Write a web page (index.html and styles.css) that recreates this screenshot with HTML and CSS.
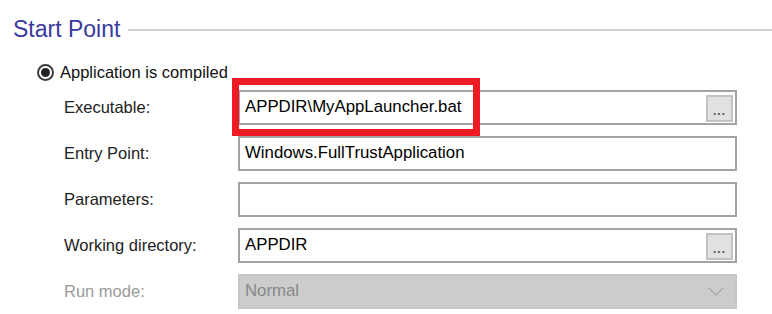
FILE: index.html
```html
<!DOCTYPE html>
<html lang="en">
<head>
    <meta charset="UTF-8">
    <meta name="viewport" content="width=device-width, initial-scale=1.0">
    <title>Start Point</title>
    <link rel="stylesheet" href="styles.css">
</head>
<body>
    <div class="panel">
        <div class="group-title">
            <span class="group-name">Start Point</span>
            <span class="rule"></span>
        </div>
        <div class="radio-row">
            <span class="radio"></span>
            <span>Application is compiled</span>
        </div>
        <div class="fields">
            <div class="field">
                <span class="label">Executable:</span>
                <div class="box">
                    <span class="value">APPDIR\MyAppLauncher.bat</span>
                    <span class="browse">...</span>
                    <span class="highlight"></span>
                </div>
            </div>
            <div class="field">
                <span class="label">Entry Point:</span>
                <div class="box">
                    <span class="value">Windows.FullTrustApplication</span>
                </div>
            </div>
            <div class="field">
                <span class="label">Parameters:</span>
                <div class="box">
                    <span class="value"></span>
                </div>
            </div>
            <div class="field">
                <span class="label">Working directory:</span>
                <div class="box">
                    <span class="value">APPDIR</span>
                    <span class="browse">...</span>
                </div>
            </div>
            <div class="field disabled">
                <span class="label">Run mode:</span>
                <div class="box">
                    <span class="value">Normal</span>
                    <svg class="chevron" width="16" height="10" viewBox="0 0 16 10">
                        <polyline points="1,1 8,8 15,1" fill="none" stroke="#a9a9a9" stroke-width="1.3"/>
                    </svg>
                </div>
            </div>
        </div>
    </div>
</body>
</html>
```

FILE: styles.css
```css
body {
    margin: 0;
    padding: 0;
    background: #ffffff;
    font-family: "Liberation Sans", Arial, sans-serif;
    color: #1e1e1e;
}
.panel {
    width: 772px;
    height: 314px;
    overflow: hidden;
}
.group-title {
    display: flex;
    align-items: center;
    gap: 8px;
    margin-top: 15px;
    padding-left: 13px;
    height: 28px;
}
.group-name {
    font-size: 23px;
    color: #3a3a9c;
    white-space: nowrap;
}
.rule {
    flex: 1;
    height: 2px;
    background-color: #d2d2d2;
    margin-top: 1px;
}
.radio-row {
    display: flex;
    align-items: center;
    gap: 6px;
    margin-top: 19px;
    padding-left: 37px;
    height: 20px;
    font-size: 16.5px;
    color: #111111;
}
.radio {
    width: 13px;
    height: 13px;
    border: 2px solid #3c3c3c;
    border-radius: 50%;
    display: flex;
    justify-content: center;
    align-items: center;
}
.radio::after {
    content: "";
    width: 9px;
    height: 9px;
    border-radius: 50%;
    background-color: #222222;
}
.fields {
    display: flex;
    flex-direction: column;
    gap: 11px;
    margin-top: 8px;
    padding-left: 64px;
}
.field {
    display: flex;
    align-items: center;
}
.label {
    width: 174px;
    font-size: 16.5px;
    color: #222222;
}
.box {
    position: relative;
    box-sizing: border-box;
    width: 499px;
    height: 35px;
    border: 2px solid #a3a3a3;
    background-color: #ffffff;
    display: flex;
    align-items: center;
    padding: 0 2px 0 5px;
}
.value {
    flex: 1;
    font-size: 16.8px;
    color: #000000;
    margin-top: -2px;
}
.browse {
    box-sizing: border-box;
    width: 27px;
    height: 27px;
    margin-top: 1px;
    background-color: #e1e1e1;
    border: 2px solid #c2c2c2;
    display: flex;
    justify-content: center;
    align-items: flex-end;
    font-size: 12px;
    font-weight: bold;
    letter-spacing: 1px;
    line-height: 12px;
    padding-bottom: 3px;
    color: #555555;
}
.highlight {
    position: absolute;
    left: -8px;
    top: -14px;
    width: 248px;
    height: 58px;
    box-sizing: border-box;
    border: 7px solid #ed1c24;
}
.disabled .label {
    color: #9a9a9a;
}
.disabled .box {
    background-color: #cccccc;
    border-color: #c6c6c6;
}
.disabled .value {
    color: #888888;
}
.chevron {
    margin-right: 9px;
}
```
